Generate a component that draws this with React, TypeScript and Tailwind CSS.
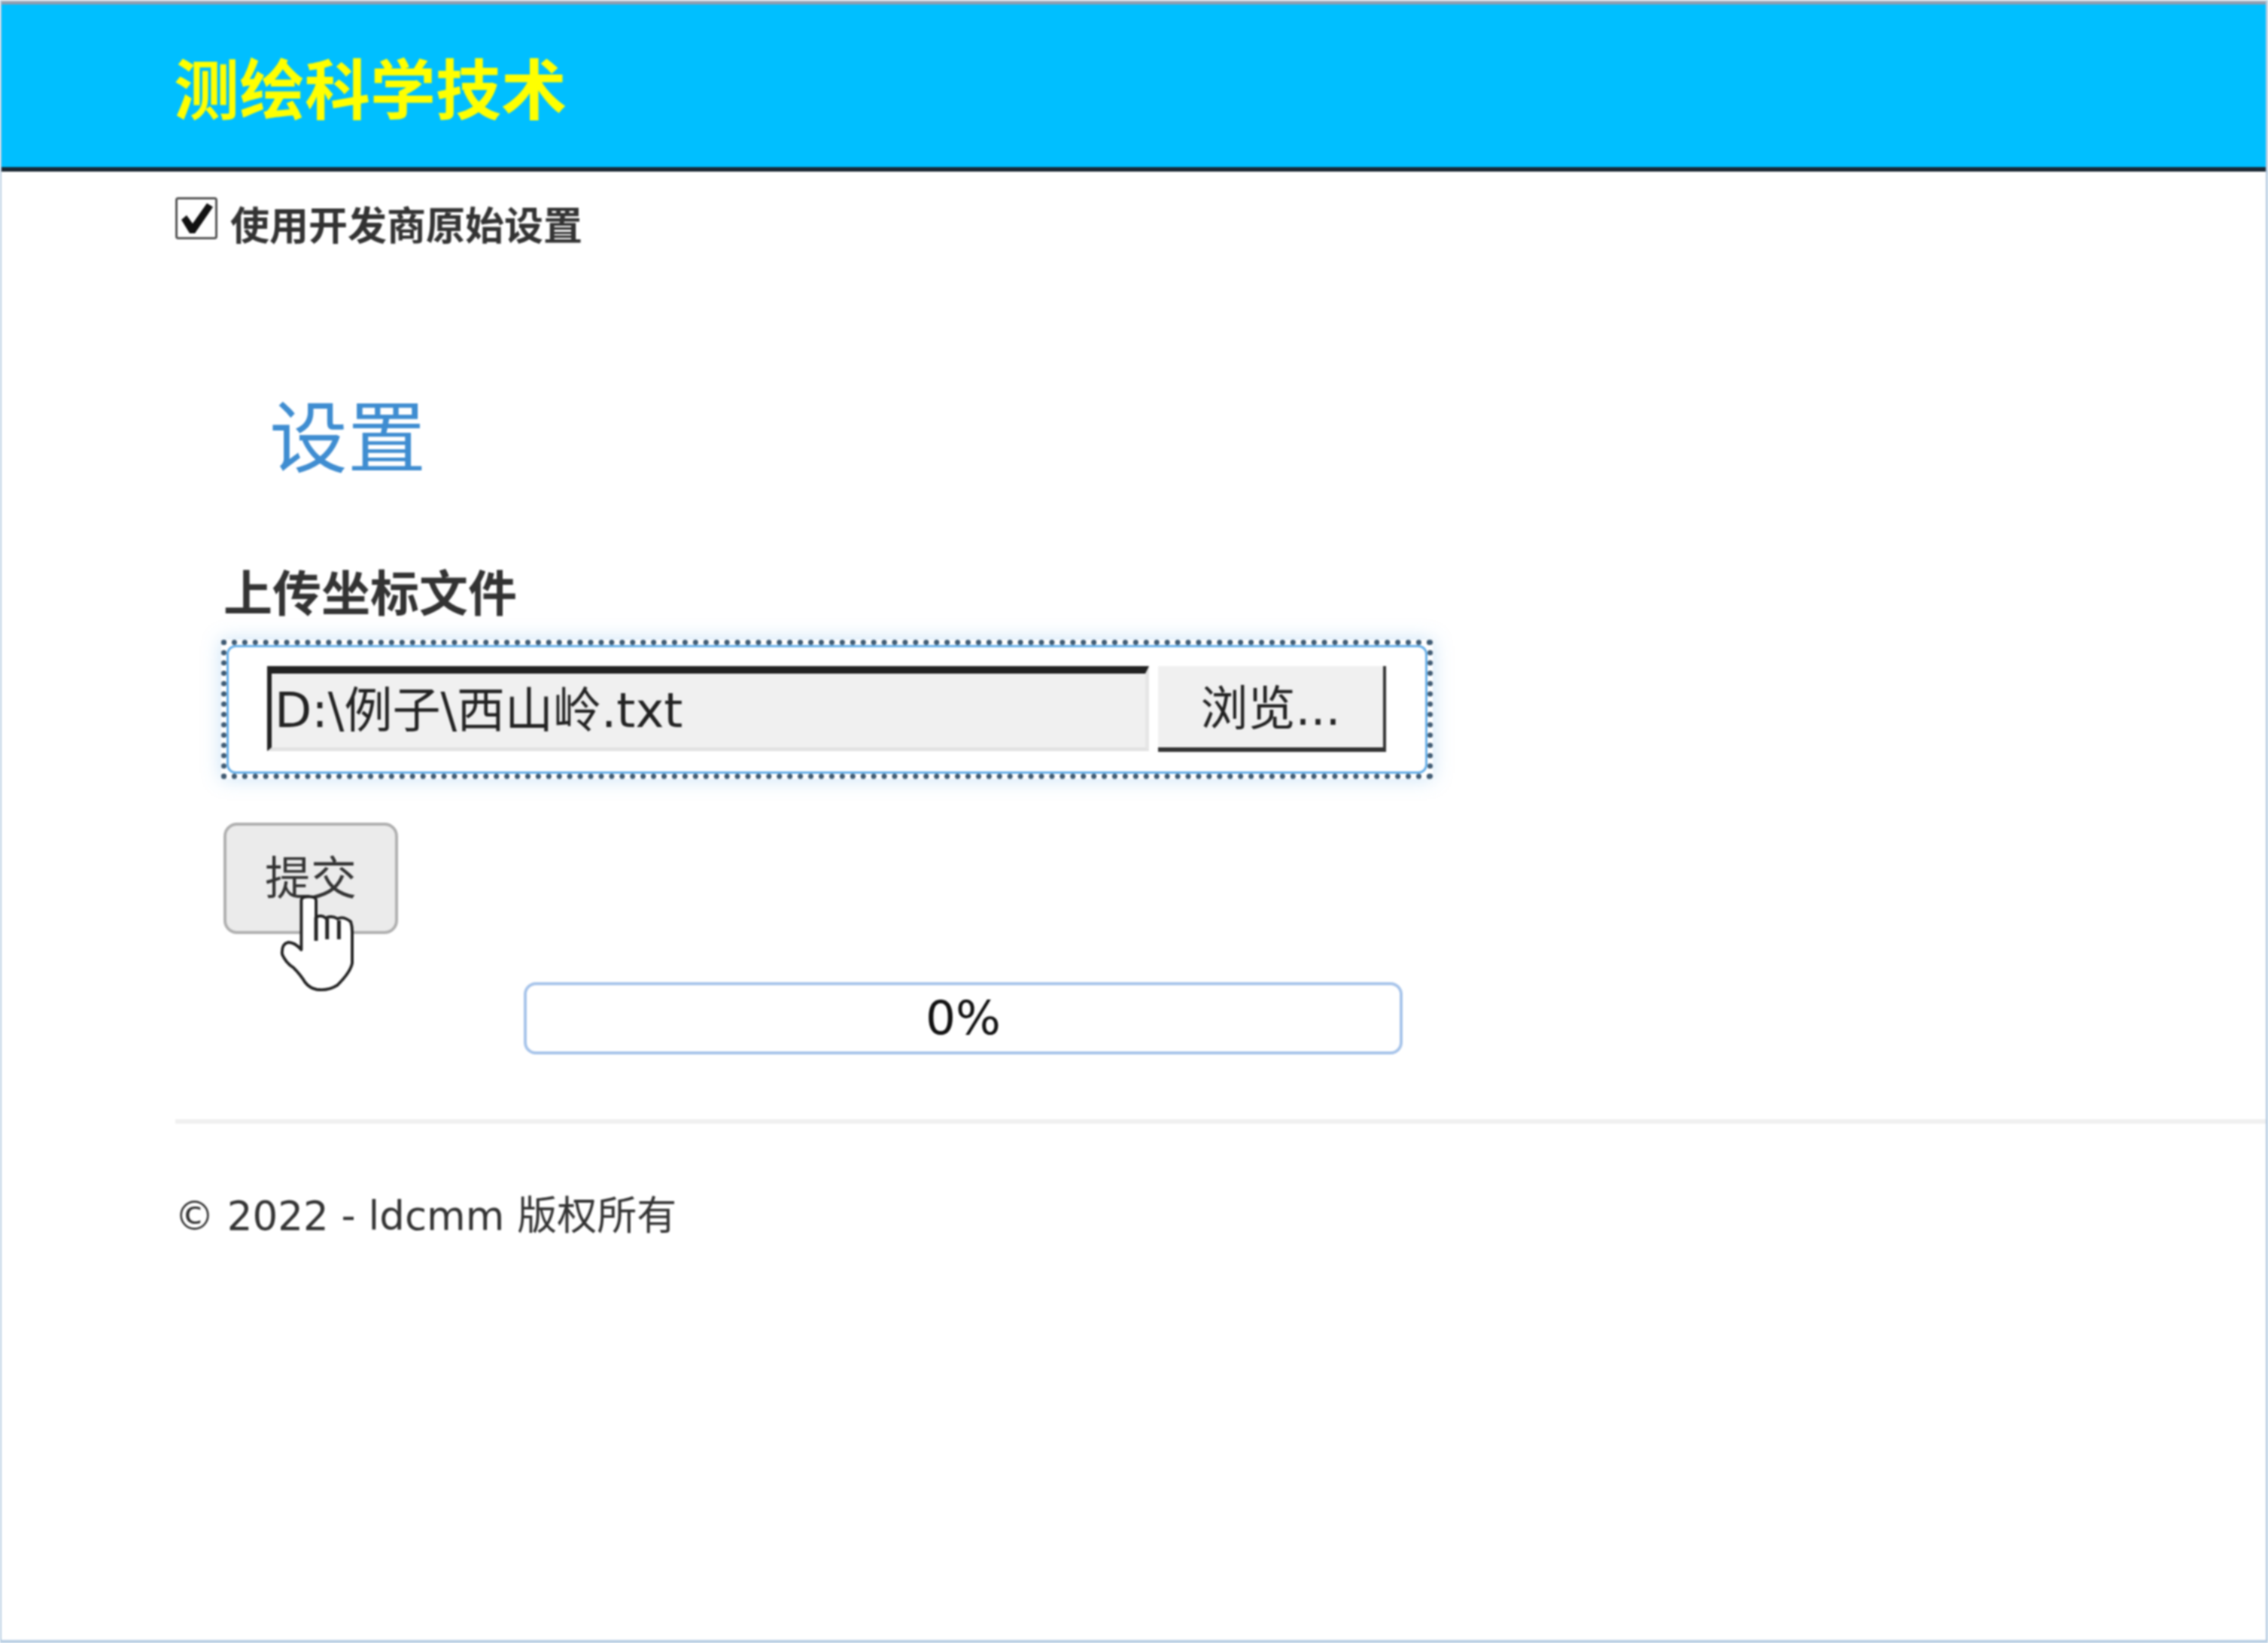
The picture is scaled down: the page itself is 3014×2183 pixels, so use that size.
export default function App() {
  return (
    <div className="w-[3014px] h-[2183px] bg-white flex flex-col border-l-2 border-r-[3px] border-b-4 border-[#b7cde2] overflow-hidden blur-[1px] font-['DejaVu_Sans','Noto_Sans_CJK_SC',sans-serif] text-[#333333]">
      <div className="h-[6px] bg-[#8e9cae] border-t-2 border-[#c9d2dc] shrink-0" />
      <header className="h-[222px] shrink-0 bg-[#00bfff] border-b-[6px] border-[#1a2833] pl-[229px] flex items-center">
        <h1 className="text-[87px] leading-[100px] font-bold text-[#ffff00] font-['Noto_Sans_CJK_SC',sans-serif]">测绘科学技术</h1>
      </header>

      <main className="pl-[231px] flex flex-col">
        <label className="mt-[34px] h-[56px] flex items-center gap-[17px]">
          <span className="w-[56px] h-[56px] border-[3px] border-[#555555] rounded-[4px] flex items-center justify-center shrink-0">
            <svg viewBox="0 0 44 40" className="w-[44px] h-[40px]">
              <path d="M2 22 L9 16 L17 27 L36 0 L44 5 L20 40 L13 40 Z" fill="#111111" />
            </svg>
          </span>
          <span className="text-[52px] leading-[60px] mt-[14px] font-bold font-['Noto_Sans_CJK_SC',sans-serif]">使用开发商原始设置</span>
        </label>

        <div className="ml-[61px] w-[1610px] flex flex-col">
          <h2 className="mt-[201px] pl-[64px] h-[112px] text-[104px] leading-[112px] font-normal text-[#3f8dd1] font-['Noto_Sans_CJK_SC',sans-serif]">设置</h2>

          <div className="mt-[117px] pl-[3px] h-[72px] text-[65px] leading-[72px] font-bold font-['Noto_Sans_CJK_SC',sans-serif]">上传坐标文件</div>

          <div className="mt-[30px] h-[185px] border-[7px] border-dotted border-[#3f5a72] shadow-[0_0_24px_rgba(102,175,233,0.35)]">
            <div className="h-full border-[3px] border-[#66afe9] rounded-[12px] bg-white pl-[51px] pr-[50px] pt-[25px]">
              <div className="flex h-[114px] gap-[12px]">
                <div className="w-[1172px] h-[113px] bg-[#f0f0f0] border-t-[10px] border-l-[6px] border-[#222222] border-b-[5px] border-b-[#e2e2e2] border-r-[5px] border-r-[#e6e6e6] flex items-center pl-[4px] text-[64px] text-[#222222] leading-[70px]">
                  D:\例子\西山岭.txt
                </div>
                <button className="w-[303px] h-[114px] pt-[6px] bg-[#f0f0f0] border-r-[4px] border-b-[6px] border-[#333333] flex items-center justify-center text-[63px] leading-[70px] text-[#222222]">
                  浏览...
                </button>
              </div>
            </div>
          </div>

          <div className="relative ml-[3px] mt-[58px] w-[232px] h-[148px]">
            <button className="w-full h-full pb-[8px] bg-[#ebebeb] border-4 border-[#b0b0b0] rounded-[18px] text-[61px] leading-[70px] text-[#333333] font-['Noto_Sans_CJK_SC',sans-serif]">
              提交
            </button>
            <svg viewBox="0 0 100 132" className="absolute left-[75px] top-[96px] w-[98px] h-[130px]">
              <path
                d="M29 74 V7 Q29 2 39 2 Q49 2 49 7 V30 Q56 26 62 31 Q70 27 78 32 Q86 28 96 36 Q98 42 98 50 V92 Q96 104 78 122 Q66 130 50 128 Q40 126 34 118 Q28 108 18 98 Q8 92 3 80 Q2 66 11 64 Q20 64 29 74 Z"
                fill="#ffffff"
                stroke="#222222"
                strokeWidth="4"
                strokeLinejoin="round"
              />
              <path d="M49 30 V62 M64 32 V60 M80 34 V60" stroke="#222222" strokeWidth="5" fill="none" />
            </svg>
          </div>

          <div className="mt-[64px] ml-[402px] w-[1168px] h-[96px] border-[4px] border-[#a7c4ea] rounded-[16px] flex items-center justify-center text-[63px] leading-[70px] text-[#111111]">
            0%
          </div>
        </div>

        <div className="mt-[86px] h-[6px] bg-[#f0f0f0]" />
        <footer className="mt-[93px] -ml-[1px] h-[60px] text-[53px] leading-[60px] text-[#333333]">© 2022 - ldcmm 版权所有</footer>
      </main>
    </div>
  );
}
